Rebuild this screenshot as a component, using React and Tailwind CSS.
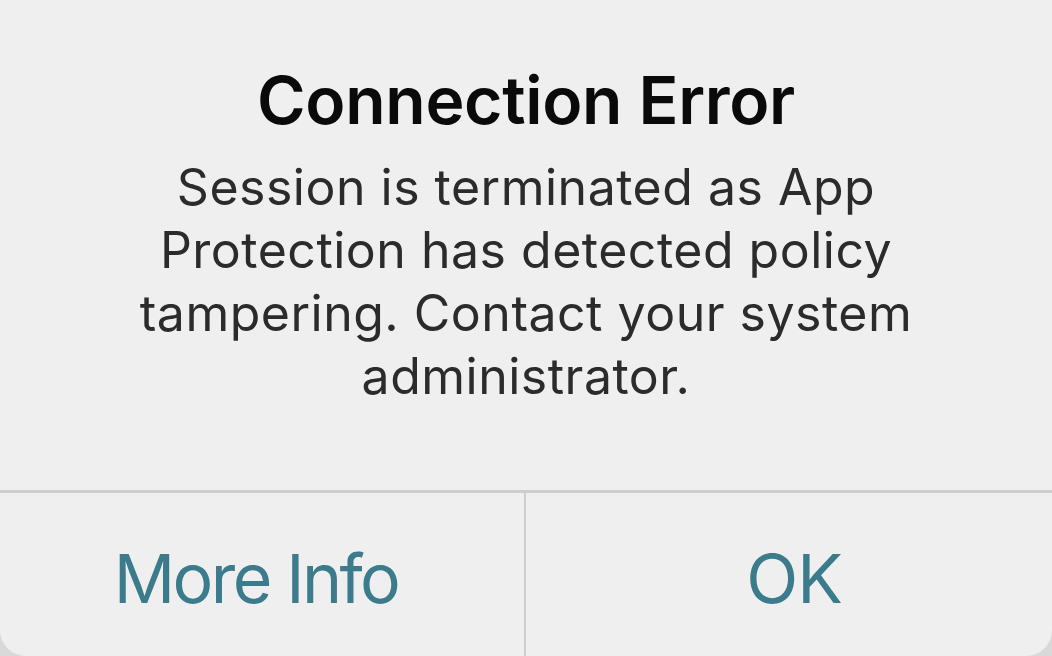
export default function App() {
  return (
    <div className="w-[1052px] h-[656px] bg-[#d9d9d9] overflow-hidden" style={{ fontFamily: 'Inter, "Noto Sans", sans-serif' }}>
      <div className="w-full h-full bg-[#efefef] rounded-b-[26px] flex flex-col">
        <div className="h-[490px] flex flex-col items-center pt-[68px]">
          <h1 className="text-[66px] leading-[64px] font-semibold text-[#0a0a0a] tracking-[-0.3px]">Connection Error</h1>
          <p className="mt-[24px] w-[860px] text-center text-[50px] leading-[63px] text-[#2b2b2b] tracking-[0.5px]">
            Session is terminated as App Protection has detected policy tampering. Contact your system administrator.
          </p>
        </div>
        <div className="flex-1 flex border-t-[3px] border-[#cdcdcd]">
          <button className="w-[524px] flex items-center justify-center text-[68px] text-[#3b7b8b] tracking-[-2.6px] pt-[6px]">
            <span className="mr-[12px]">More Info</span>
          </button>
          <div className="w-[2px] bg-[#cdcdcd]"></div>
          <button className="flex-1 flex items-center justify-center text-[68px] text-[#3b7b8b] tracking-[-1px] pt-[6px]">
            <span className="ml-[10px]">OK</span>
          </button>
        </div>
      </div>
    </div>
  );
}
